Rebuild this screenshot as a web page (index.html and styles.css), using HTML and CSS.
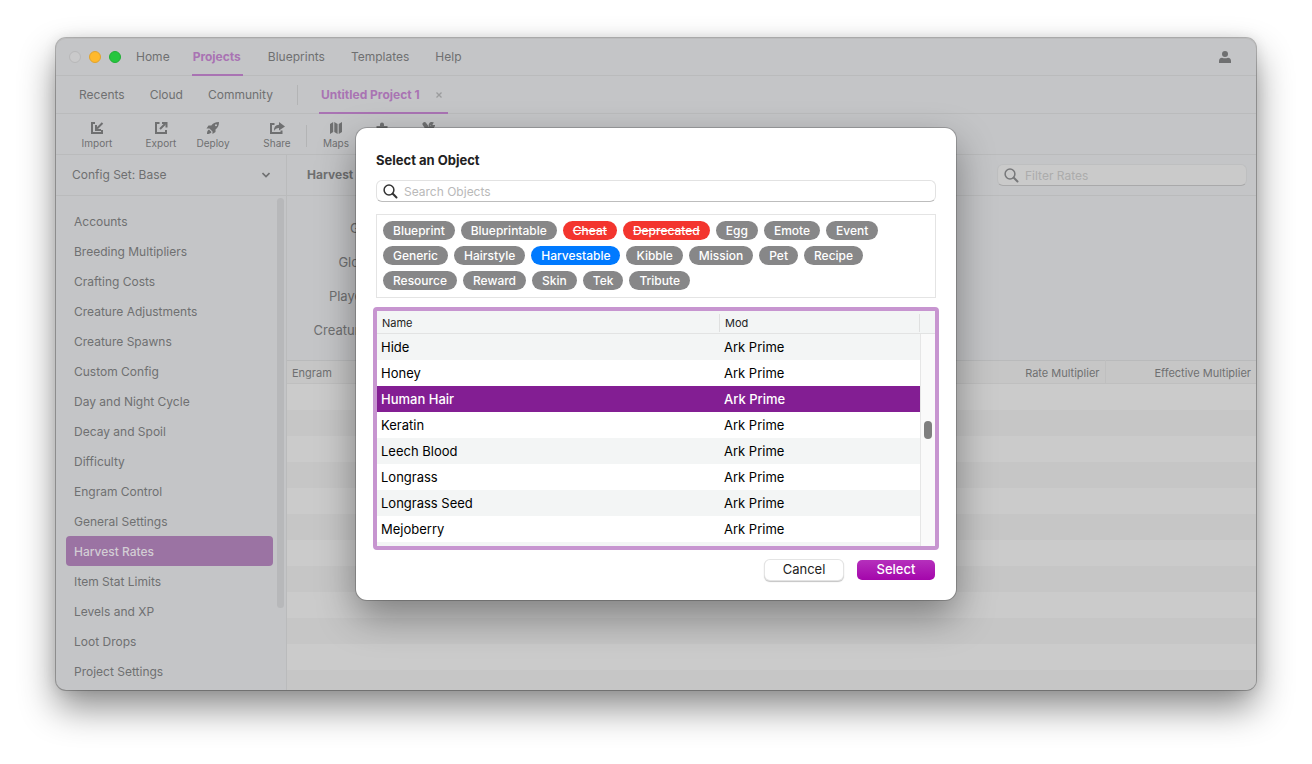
FILE: index.html
```html
<!DOCTYPE html>
<html lang="en">
<head>
<meta charset="utf-8">
<title>Untitled Project 1</title>
<link rel="stylesheet" href="styles.css">
</head>
<body>
<div class="window">
  <header class="titlebar">
    <div class="lights">
      <button class="light" aria-label="Close"></button>
      <button class="light light-min" aria-label="Minimize"></button>
      <button class="light light-max" aria-label="Zoom"></button>
    </div>
    <nav class="tabs maintabs">
      <a href="#home">Home</a>
      <a href="#projects" class="active">Projects</a>
      <a href="#blueprints">Blueprints</a>
      <a href="#templates">Templates</a>
      <a href="#help">Help</a>
    </nav>
    <button class="account" aria-label="Account">
      <svg width="12" height="12" viewBox="0 0 12 12" fill="currentColor"><circle cx="6" cy="3" r="3"/><path d="M0 12V10Q0 7 3 6.700Q6 8 9 6.700Q12 7 12 10V12Z"/></svg>
    </button>
  </header>

  <nav class="tabs subtabs">
    <a href="#recents">Recents</a>
    <a href="#cloud">Cloud</a>
    <a href="#community">Community</a>
    <span class="divider"></span>
    <div class="project-tab active">
      <a href="#project">Untitled Project 1</a>
      <button aria-label="Close project"><svg width="6" height="6" viewBox="0 0 6 6" fill="none" stroke="currentColor" stroke-width="1.300"><path d="M.5.5l5 5M5.500.5l-5 5"/></svg></button>
    </div>
  </nav>

  <div class="toolbar">
    <button class="tool split"><svg width="14" height="12" viewBox="0 0 14 12" fill="none" stroke="currentColor" stroke-width="2"><path d="M5 1H2V11H12V8"/><path d="M12.500 1L7 6.500M6 3V8H11"/></svg>Import</button>
    <button class="tool"><svg width="14" height="12" viewBox="0 0 14 12" fill="none" stroke="currentColor" stroke-width="2"><path d="M5.500 1H2V11H12V8"/><path d="M6 7L11 2M8 1H12.500V5.500"/></svg>Export</button>
    <button class="tool split"><svg width="14" height="12" viewBox="0 0 14 12" fill="currentColor"><path fill-rule="evenodd" d="M13 0C9 0 7 1.500 5.300 3.500H2.500L.5 6.500H3.500L6.500 9.500V12L9.500 10V7.500C12 5.500 13 3.500 13 0ZM10 2.200a1 1 0 1 1 0 2a1 1 0 1 1 0-2ZM3 7.500C1.500 8 1 10 1 12C3 12 5 11.500 5.500 10Z"/></svg>Deploy</button>
    <button class="tool"><svg width="15" height="12" viewBox="0 0 15 12"><path d="M4.500 2H1V11H11.500V8.500" fill="none" stroke="currentColor" stroke-width="2"/><path fill="currentColor" d="M9 0L15 4.500L9 8.500V6Q5.500 6 4 9Q3.500 3 9 2.700Z"/></svg>Share</button>
    <span class="divider"></span>
    <button class="tool narrow"><svg width="12" height="12" viewBox="0 0 12 12" fill="currentColor"><path d="M0 2L3.200 0V10L0 12ZM4.300 0L7.600 2V12L4.300 10ZM8.700 2L12 0V10L8.700 12Z"/></svg>Maps</button>
    <button class="tool narrow" aria-label="Mods"><svg width="12" height="12" viewBox="0 0 12 12" fill="currentColor"><path d="M4 4V2.500a2 2 0 1 1 4 0V4H11.500V12H.5V4Z"/></svg></button>
    <button class="tool narrow" aria-label="Tools"><svg width="13" height="12" viewBox="0 0 13 12" fill="none" stroke="currentColor"><path stroke-width="4" stroke-linecap="round" d="M2.500 2.200L4.500 5"/><path stroke-width="2" d="M5 5L11 11M2 11L8 5"/><path stroke-width="1.800" d="M10.500 1A2.300 2.300 0 1 0 12 4L10 4L9.500 2.500Z"/></svg></button>
  </div>

  <div class="body">
    <aside class="sidebar">
      <button class="config">Config Set: Base<svg width="8" height="6" viewBox="0 0 8 6" fill="none" stroke="currentColor" stroke-width="1.600"><path d="M.5 1L4 4.500L7.500 1"/></svg></button>
      <div class="menu-wrap">
        <ul class="menu">
          <li><a href="#accounts">Accounts</a></li>
          <li><a href="#breeding">Breeding Multipliers</a></li>
          <li><a href="#crafting">Crafting Costs</a></li>
          <li><a href="#adjustments">Creature Adjustments</a></li>
          <li><a href="#spawns">Creature Spawns</a></li>
          <li><a href="#custom">Custom Config</a></li>
          <li><a href="#daynight">Day and Night Cycle</a></li>
          <li><a href="#decay">Decay and Spoil</a></li>
          <li><a href="#difficulty">Difficulty</a></li>
          <li><a href="#engrams">Engram Control</a></li>
          <li><a href="#general">General Settings</a></li>
          <li><a href="#harvest" class="current" aria-current="page">Harvest Rates</a></li>
          <li><a href="#stats">Item Stat Limits</a></li>
          <li><a href="#levels">Levels and XP</a></li>
          <li><a href="#loot">Loot Drops</a></li>
          <li><a href="#settings">Project Settings</a></li>
        </ul>
        <span class="menu-scroll"></span>
      </div>
    </aside>

    <main class="editor">
      <div class="editor-head">
        <h1>Harvest</h1>
        <label class="search filter">
          <svg width="15" height="15" viewBox="0 0 15 15" fill="none" stroke="currentColor"><circle cx="6" cy="6" r="4.900" stroke-width="1.500"/><path stroke-width="2" stroke-linecap="round" d="M9.800 9.800L13.500 13.500"/></svg>
          <input type="text" placeholder="Filter Rates" aria-label="Filter Rates">
        </label>
      </div>
      <div class="fields">
        <span>Ga</span>
        <span>Glob</span>
        <span>Player</span>
        <span>Creature</span>
      </div>
      <table class="rates">
        <thead><tr><th class="col-engram">Engram</th><th class="num">Rate Multiplier</th><th class="num col-eff">Effective Multiplier</th></tr></thead>
      </table>
      <div class="stripes"></div>
    </main>
  </div>

  <section class="dialog" role="dialog" aria-labelledby="dialog-title">
    <h2 id="dialog-title">Select an Object</h2>
    <label class="search">
      <svg width="15" height="15" viewBox="0 0 15 15" fill="none" stroke="currentColor"><circle cx="6" cy="6" r="4.900" stroke-width="1.500"/><path stroke-width="2" stroke-linecap="round" d="M9.800 9.800L13.500 13.500"/></svg>
      <input type="text" placeholder="Search Objects" aria-label="Search Objects">
    </label>
    <div class="tags">
      <div class="tag-row"><button>Blueprint</button><button>Blueprintable</button><button class="exclude">Cheat</button><button class="exclude">Deprecated</button><button>Egg</button><button>Emote</button><button>Event</button></div>
      <div class="tag-row"><button>Generic</button><button>Hairstyle</button><button class="include">Harvestable</button><button>Kibble</button><button>Mission</button><button>Pet</button><button>Recipe</button></div>
      <div class="tag-row"><button>Resource</button><button>Reward</button><button>Skin</button><button>Tek</button><button>Tribute</button></div>
    </div>
    <div class="list">
      <table>
        <thead><tr><th class="name"><span>Name</span></th><th><span>Mod</span></th><th class="gutter"></th></tr></thead>
        <tbody>
          <tr><td>Hide</td><td>Ark Prime</td></tr>
          <tr><td>Honey</td><td>Ark Prime</td></tr>
          <tr class="selected"><td>Human Hair</td><td>Ark Prime</td></tr>
          <tr><td>Keratin</td><td>Ark Prime</td></tr>
          <tr><td>Leech Blood</td><td>Ark Prime</td></tr>
          <tr><td>Longrass</td><td>Ark Prime</td></tr>
          <tr><td>Longrass Seed</td><td>Ark Prime</td></tr>
          <tr><td>Mejoberry</td><td>Ark Prime</td></tr>
          <tr><td></td><td></td></tr>
        </tbody>
      </table>
      <div class="track"><span class="thumb"></span></div>
    </div>
    <div class="actions">
      <button class="btn">Cancel</button>
      <button class="btn primary">Select</button>
    </div>
  </section>
</div>
</body>
</html>
```
FILE: styles.css
```css
* { box-sizing: border-box; }

body {
  margin: 0;
  min-height: 100vh;
  display: flex;
  padding: 38px 56px 74px;
  background: #fff;
  font: 12px/16px Inter, "Liberation Sans", sans-serif;
  color: #6f7071;
}

button {
  font: inherit;
  color: inherit;
  background: none;
  border: 0;
  padding: 0;
}

a { color: inherit; text-decoration: none; }
svg { display: block; flex: none; }

.window {
  position: relative;
  flex: 1;
  min-width: 0;
  display: flex;
  flex-direction: column;
  background: #c4c5c7;
  border-radius: 10px;
  box-shadow: inset 0 1px 0 #bcbcbd, 0 0 0 1px rgba(0, 0, 0, .25), 0 18px 36px rgba(0, 0, 0, .45), 0 0 14px rgba(0, 0, 0, .1);
}

.titlebar {
  display: flex;
  height: 38px;
  padding: 0 25px 0 13px;
  border-bottom: 1px solid #babbbc;
}

.lights { display: flex; align-items: center; gap: 8px; margin-right: 14px; }
.light { width: 12px; height: 12px; border-radius: 50%; background: #cacacb; border: 1px solid #b8b8b9; }
.light-min { background: #ffb92c; border-color: #e0a32f; }
.light-max { background: #25c63e; border-color: #20ae35; }

.tabs { display: flex; gap: 24px; }
.tabs > * { display: flex; align-items: center; margin-bottom: -1px; }
.tabs .active { font-weight: 700; color: #a973b3; border-bottom: 2px solid #a973b3; padding-top: 2px; }
.maintabs > * { padding: 0 1px; }
.maintabs .active { margin: 0 0 -1px -3px; padding: 2px 2px 0 1px; }
.account { margin-left: auto; }

.subtabs { gap: 25px; height: 38px; padding-left: 23px; border-bottom: 1px solid #babbbc; }
.project-tab { gap: 16px; padding: 0 6px 0 2px; }
.project-tab button { color: #9b9c9d; }

.divider { flex: none; width: 1px; background: #b3b4b5; }
.subtabs .divider { height: 20px; align-self: center; margin: 0 -4px 0 -1px; }

.toolbar { display: flex; align-items: center; height: 41px; padding: 3px 0 0 15px; border-bottom: 1px solid #babbbc; }
.tool { display: flex; flex-direction: column; align-items: center; gap: 2px; width: 52px; height: 28px; font-size: 10px; line-height: 14px; }
.tool.split { margin-right: 12px; }
.tool.narrow { width: 46px; }
.toolbar .divider { height: 22px; margin: 0 6px 0 3px; }

.body { flex: 1; min-height: 0; display: flex; }

.sidebar { width: 231px; flex: none; border-right: 1px solid #babbbc; }
.config { display: flex; width: 100%; height: 41px; align-items: center; justify-content: space-between; padding: 0 16px; border-bottom: 1px solid #babbbc; }
.menu-wrap { display: flex; gap: 4px; padding: 2px 2px 0 10px; }
.menu { flex: 1; list-style: none; margin: 8px 0 0; padding: 0; }
.menu a { display: block; padding: 8px 8px 6px; border-radius: 4px; }
.menu .current { background: #9b73a3; color: #d2cdd4; font-weight: 500; }
.menu-scroll { width: 7px; height: 410px; border-radius: 4px; background: #b7b8ba; }

.editor { flex: 1; min-width: 0; display: flex; flex-direction: column; }
.editor-head { display: flex; align-items: center; justify-content: space-between; height: 41px; padding: 0 9px 0 20px; border-bottom: 1px solid #babbbc; }
h1 { margin: 0; font-size: 12px; line-height: 16px; font-weight: 700; }

.search { display: flex; align-items: center; gap: 6px; height: 22px; padding: 0 6px; color: #333; background: #fff; border: 1px solid #e2e2e2; border-bottom-color: #bdbdbd; border-radius: 6px; }
.search input { flex: 1; min-width: 0; border: 0; outline: 0; padding: 2px 0 0; background: none; font: inherit; color: inherit; }
.search input::placeholder { color: #b9b9b9; opacity: 1; }
.filter { width: 250px; color: #77787a; background: #cacaca; border-color: #bebfc0; border-bottom-color: #a9a9aa; }
.filter input::placeholder { color: #acacac; }

.fields { display: grid; gap: 18px; width: 80px; height: 164px; align-content: start; justify-items: end; padding-top: 24px; font-size: 13px; }

.rates { width: 100%; border-collapse: collapse; background: #c6c6c6; font-size: 11px; line-height: 14px; }
.rates tr { height: 24px; box-shadow: inset 0 1px 0 #b9babb, inset 0 -1px 0 #bfbfbf; }
.rates th { padding: 2px 5px 0; font-weight: 400; text-align: left; }
.rates .num { text-align: right; }
.rates .col-eff { width: 151px; border-left: 1px solid #bfbfbf; }
.stripes { flex: 1; border-bottom-right-radius: 10px; background: repeating-linear-gradient(#cbcbcb 0 26px, #c6c6c6 26px 52px); }

.dialog {
  position: absolute;
  inset: 90px 0;
  width: 600px;
  margin: 0 auto;
  display: flex;
  flex-direction: column;
  padding: 24px 20px 20px;
  background: #fff;
  color: #222;
  border-radius: 11px;
  box-shadow: 0 0 0 1px rgba(0, 0, 0, .2), 0 16px 38px rgba(0, 0, 0, .38);
}

h2 { margin: 0 0 12px; font-size: 13px; line-height: 16px; font-weight: 700; }

.tags { display: grid; gap: 6px; height: 84px; margin: 12px 0 9px; padding: 6px; border: 1px solid #e4e4e4; align-content: start; }
.tag-row { display: flex; gap: 6px; }
.tags button { height: 19px; padding: 0 10px; border-radius: 10px; background: #878788; color: #fff; font-weight: 500; }
.tags .exclude { background: #f3352e; text-decoration: line-through; }
.tags .include { background: #007aff; }

.list { flex: 1; min-height: 0; margin: 0 -3px; border: 4px solid #c795d0; border-radius: 4px; overflow: hidden; display: grid; color: #000; }
.list table { grid-area: 1 / 1; width: 100%; table-layout: fixed; border-collapse: collapse; font-size: 13px; align-self: start; }
.list th { height: 23px; padding: 0; background: #f3f5f5; box-shadow: inset 0 -1px 0 #e2e3e3; text-align: left; font-size: 11px; line-height: 18px; font-weight: 400; color: #222; }
.list th span { display: block; border-right: 1px solid #dfe0e0; padding-left: 5px; }
.list .name { width: 343px; }
.list .gutter { width: 15px; }
.list td { height: 26px; padding: 0 4px; }
.list tbody tr:nth-child(odd) { background: #f3f5f5; }
.list tbody tr.selected { background: #831e93; color: #fff; font-weight: 500; }
.track { grid-area: 1 / 1; justify-self: end; width: 15px; margin-top: 23px; padding: 87px 3px 0; background: #fafafa; border-left: 1px solid #e6e6e6; }
.thumb { display: block; width: 8px; height: 18px; border-radius: 4px; background: #7f7f7f; }

.actions { display: flex; justify-content: flex-end; gap: 14px; margin: 10px 1px 0 0; }
.btn { width: 78px; height: 20px; border-radius: 5px; font-size: 13px; line-height: 18px; padding-bottom: 2px; background: #fff; box-shadow: 0 0 0 1px #e4e4e4, 0 1px 1px 1px #c4c4c4; }
.primary { background: linear-gradient(#b530bc, #a406ab); color: #fff; font-weight: 500; box-shadow: none; }
```
